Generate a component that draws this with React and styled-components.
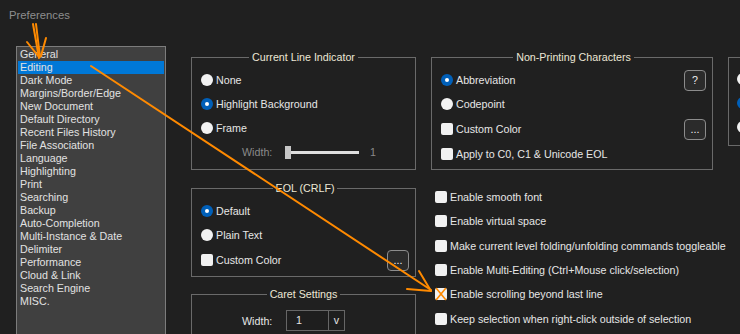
import React from "react";
import styled, { createGlobalStyle } from "styled-components";

const GlobalStyle = createGlobalStyle`
  *, *::before, *::after { box-sizing: border-box; }
  html, body {
    margin: 0;
    padding: 0;
    background: #202020;
    overflow: hidden;
  }
  body {
    font-family: "Liberation Sans", Arial, sans-serif;
    font-size: 10.7px;
    color: #e6e6e6;
  }
`;

const pages = [
  "General",
  "Editing",
  "Dark Mode",
  "Margins/Border/Edge",
  "New Document",
  "Default Directory",
  "Recent Files History",
  "File Association",
  "Language",
  "Highlighting",
  "Print",
  "Searching",
  "Backup",
  "Auto-Completion",
  "Multi-Instance & Date",
  "Delimiter",
  "Performance",
  "Cloud & Link",
  "Search Engine",
  "MISC.",
];

const options = [
  { label: "Enable smooth font" },
  { label: "Enable virtual space" },
  { label: "Make current level folding/unfolding commands toggleable" },
  { label: "Enable Multi-Editing (Ctrl+Mouse click/selection)" },
  { label: "Enable scrolling beyond last line" },
  { label: "Keep selection when right-click outside of selection" },
];

const App = () => {
  return (
    <>
      <GlobalStyle />
      <Window>
        <TitleBar>Preferences</TitleBar>
        <Body>
          <PageList>
            {pages.map((p) => (
              <PageItem key={p} $active={p === "Editing"}>
                {p}
              </PageItem>
            ))}
          </PageList>

          <Settings>
            <Group>
              <Legend>Current Line Indicator</Legend>
              <Row>
                <Radio />
                <span>None</span>
              </Row>
              <Row>
                <Radio $on />
                <span>Highlight Background</span>
              </Row>
              <Row>
                <Radio />
                <span>Frame</span>
              </Row>
              <Row>
                <FieldLabel $dim>Width:</FieldLabel>
                <Thumb />
                <Track />
                <SliderValue>1</SliderValue>
              </Row>
            </Group>

            <Group $pr={6}>
              <Legend>Non-Printing Characters</Legend>
              <Row>
                <Radio $on />
                <span>Abbreviation</span>
                <SmallButton>?</SmallButton>
              </Row>
              <Row>
                <Radio />
                <span>Codepoint</span>
              </Row>
              <Row $h={26}>
                <Check />
                <span>Custom Color</span>
                <SmallButton>...</SmallButton>
              </Row>
              <Row>
                <Check />
                <span>Apply to C0, C1 &amp; Unicode EOL</span>
              </Row>
            </Group>

            <SideBox>
              <Row>
                <Radio />
              </Row>
              <Row>
                <Radio $on />
              </Row>
              <Row>
                <Radio />
              </Row>
            </SideBox>

            <Stack>
              <Group $pr={6}>
                <Legend>EOL (CRLF)</Legend>
                <Row>
                  <Radio $on />
                  <span>Default</span>
                </Row>
                <Row>
                  <Radio />
                  <span>Plain Text</span>
                </Row>
                <Row $h={26}>
                  <Check />
                  <span>Custom Color</span>
                  <SmallButton>...</SmallButton>
                </Row>
              </Group>

              <Group>
                <Legend>Caret Settings</Legend>
                <Row $h={31}>
                  <FieldLabel>Width:</FieldLabel>
                  <Combo>
                    <ComboValue>1</ComboValue>
                    <ComboArrow>v</ComboArrow>
                  </Combo>
                </Row>
              </Group>
            </Stack>

            <OptionList>
              {options.map((o) => (
                <OptionRow key={o.label}>
                  <Check />
                  <span>{o.label}</span>
                </OptionRow>
              ))}
            </OptionList>
          </Settings>
        </Body>

        <Annotation width="740" height="334" viewBox="0 0 740 334">
          <g stroke="#ff8a00" strokeWidth="2" fill="none" strokeLinecap="round">
            <path d="M33 24 L39 58" />
            <path d="M36 24 L40 57" />
            <path d="M27 42 L39 57" />
            <path d="M46 38 L41 56" />
            <path d="M91 66 L431 290" />
            <path d="M407 289 L431 291" />
            <path d="M419 271 L431 291" />
            <path d="M436.5 288.5 L445.5 299.5" strokeWidth="1.6" />
            <path d="M445.5 288.5 L436.5 299.5" strokeWidth="1.6" />
          </g>
        </Annotation>
      </Window>
    </>
  );
};

const Window = styled.div`
  position: relative;
  width: 740px;
  height: 334px;
  overflow: hidden;
  background: #202020;
`;

const TitleBar = styled.div`
  height: 30px;
  line-height: 30px;
  padding-left: 9px;
  font-size: 11.3px;
  color: #8e8e8e;
`;

const Body = styled.div`
  display: flex;
  align-items: flex-start;
  gap: 25px;
  padding: 16px 0 0 16px;
`;

const PageList = styled.ul`
  list-style: none;
  margin: 0;
  padding: 1px;
  width: 150px;
  height: 300px;
  flex: none;
  background: #404040;
  border: 1px solid #7c7c7c;
`;

const PageItem = styled.li`
  height: 13px;
  line-height: 13px;
  padding-left: 2px;
  white-space: nowrap;
  color: #e2e2e2;
  background: ${(p) => (p.$active ? "#0078d7" : "transparent")};
`;

const Settings = styled.div`
  display: grid;
  grid-template-columns: 225px 282px 150px;
  grid-template-rows: auto auto;
  column-gap: 15px;
  margin-top: 4px;
  flex: none;
`;

const Stack = styled.div`
  display: flex;
  flex-direction: column;
  gap: 10px;
  margin-top: 11px;
`;

const Group = styled.fieldset`
  margin: 0;
  min-width: 0;
  border: 1px solid #6a6a6a;
  padding: 4px ${(p) => p.$pr || 9}px 3px 9px;
`;

const Legend = styled.legend`
  margin: 0 auto;
  padding: 0 3px;
  line-height: 14px;
  color: #ece7d6;
`;

const SideBox = styled.div`
  align-self: start;
  margin-top: 7px;
  height: 89px;
  border: 1px solid #6a6a6a;
  padding: 9px 8px 0;
`;

const Row = styled.div`
  display: flex;
  align-items: center;
  gap: 3px;
  height: ${(p) => p.$h || 24}px;
  white-space: nowrap;
`;

const Radio = styled.span`
  flex: none;
  width: 12px;
  height: 12px;
  border-radius: 50%;
  display: flex;
  align-items: center;
  justify-content: center;
  background: ${(p) => (p.$on ? "#005fb8" : "#f2f2f2")};

  &::after {
    content: "";
    width: 4px;
    height: 4px;
    border-radius: 50%;
    background: #ffffff;
    display: ${(p) => (p.$on ? "block" : "none")};
  }
`;

const Check = styled.span`
  flex: none;
  width: 12px;
  height: 12px;
  border-radius: 2px;
  background: #f1f1f1;
`;

const SmallButton = styled.button`
  margin-left: auto;
  width: 22px;
  height: 21px;
  padding: 0;
  border: 1px solid #8c8c8c;
  border-radius: 4px;
  background: #2b2b2b;
  color: #f0f0f0;
  font-family: inherit;
  font-size: 10.7px;
  line-height: 17px;
`;

const FieldLabel = styled.span`
  width: 41px;
  margin-left: 41px;
  flex: none;
  color: ${(p) => (p.$dim ? "#8a8a8a" : "#e6e6e6")};
`;

const Thumb = styled.span`
  flex: none;
  width: 6px;
  height: 13px;
  margin-left: -1px;
  background: #c6c6c6;
`;

const Track = styled.span`
  flex: none;
  width: 68px;
  height: 3px;
  margin-left: -3px;
  background: #dedede;
`;

const SliderValue = styled.span`
  margin-left: 8px;
  color: #8a8a8a;
`;

const Combo = styled.div`
  display: flex;
  width: 59px;
  height: 21px;
  border: 1px solid #666666;
  background: #1e1e1e;
`;

const ComboValue = styled.span`
  flex: 1;
  padding-left: 9px;
  line-height: 19px;
`;

const ComboArrow = styled.span`
  width: 16px;
  border-left: 1px solid #666666;
  text-align: center;
  line-height: 18px;
`;

const OptionList = styled.div`
  margin-top: 15px;
  padding-left: 4px;
`;

const OptionRow = styled.div`
  display: flex;
  align-items: center;
  gap: 3px;
  height: 24.3px;
  white-space: nowrap;
`;

const Annotation = styled.svg`
  position: absolute;
  top: 0;
  left: 0;
  pointer-events: none;
`;

export default App;
